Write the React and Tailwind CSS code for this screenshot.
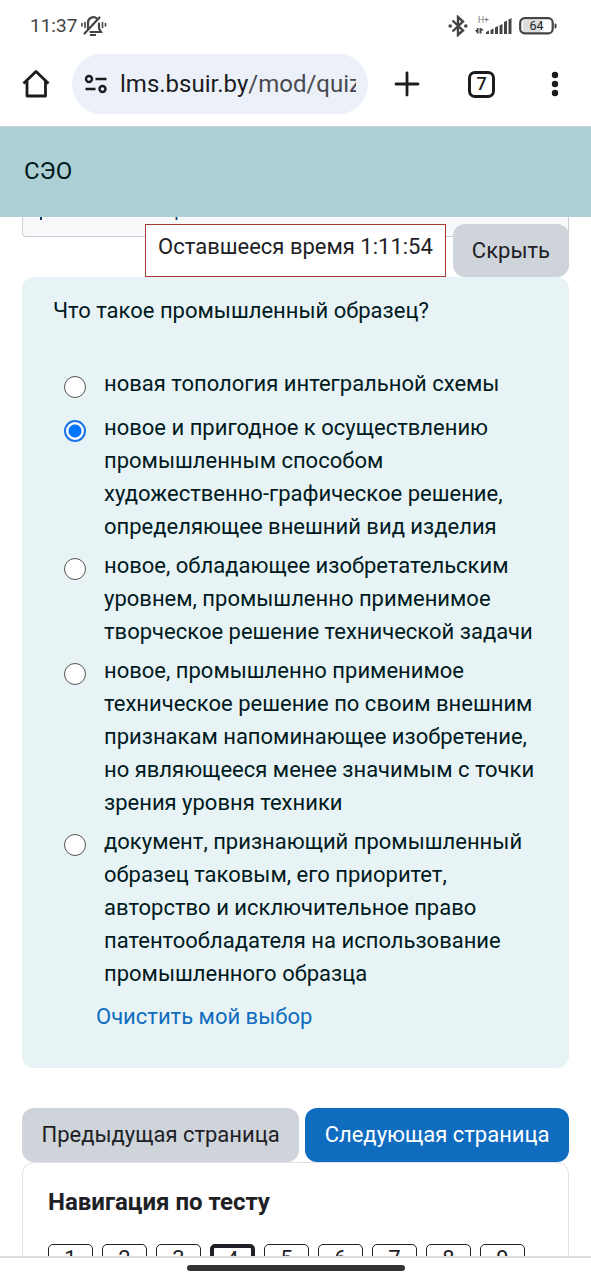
import { useState } from "react";

const answers = [
  "новая топология интегральной схемы",
  "новое и пригодное к осуществлению промышленным способом художественно-графическое решение, определяющее внешний вид изделия",
  "новое, обладающее изобретательским уровнем, промышленно применимое творческое решение технической задачи",
  "новое, промышленно применимое техническое решение по своим внешним признакам напоминающее изобретение, но являющееся менее значимым с точки зрения уровня техники",
  "документ, признающий промышленный образец таковым, его приоритет, авторство и исключительное право патентообладателя на использование промышленного образца",
];

function StatusBar() {
  return (
    <div className="flex h-[52px] shrink-0 items-center justify-between pl-[30px] pr-[34px] text-[#444444]">
      <div className="flex items-center gap-1">
        <span className="text-[19px] leading-6">11:37</span>
        <svg width="26" height="24" viewBox="0 0 26 24" fill="none" stroke="currentColor" strokeWidth="2.200" strokeLinecap="round">
          <path d="M7 14.500V9a5.500 5.500 0 0 1 9-4.500M18 9.500v5l2 3.500H9.500" />
          <path d="M3.500 19.500L18.500 3.500" />
          <path d="M9 21h6" strokeLinecap="butt" strokeWidth="2" />
          <path d="M1 9.500v2.500M4 8.500v5M21.500 8.500v5M24.500 9.500v2.500" strokeWidth="1.600" />
        </svg>
      </div>
      <div className="flex items-center gap-[7px]">
        <svg width="20" height="22" viewBox="0 0 20 22" fill="none" stroke="currentColor" strokeWidth="2.400">
          <path d="M4.500 5.500L15 15.500L10 20V2l5 4.500L4.500 16.500" />
          <circle cx="2.200" cy="11" r="1.800" fill="currentColor" stroke="none" />
          <circle cx="17.800" cy="11" r="1.800" fill="currentColor" stroke="none" />
        </svg>
        <svg width="37" height="20" viewBox="0 0 37 20" fill="currentColor">
          <text x="3" y="7" fontSize="8.500" fontFamily="Roboto, sans-serif" fill="#777777">H+</text>
          <path d="M0 14h1.700V12H3.500v5.500H2.200zM4.500 12H6l3 2.500H6.500v3h-2z" />
          <path d="M11 18v-2l3-1.500V18zM15.500 18v-4l3-1.500V18zM20 18v-6.500l3-1.500v8zM24.500 18V9.500l3-1.500v10zM29 18V6l3-1.500V18zM33.500 18V3.500L36.500 2v16z" />
        </svg>
        <svg width="38" height="18" viewBox="0 0 38 18" fill="none">
          <rect x="4" y="3" width="18" height="12" fill="#dddddd" />
          <rect x="1.200" y="1.200" width="32.500" height="15.200" rx="4.500" stroke="#444444" strokeWidth="2.200" />
          <rect x="35.500" y="6.500" width="2" height="5" rx="1" fill="#444444" />
          <text x="17.500" y="13.300" fontSize="12.500" textAnchor="middle" fontFamily="Roboto, sans-serif" fill="#222222">64</text>
        </svg>
      </div>
    </div>
  );
}

function BrowserBar() {
  return (
    <div className="flex h-[74px] shrink-0 items-center pb-[10px] pl-[22px] pr-[26px] text-[#1c1c1e]">
      <button type="button" aria-label="Главная" className="shrink-0">
        <svg width="28" height="30" viewBox="0 0 28 30" fill="none" stroke="currentColor" strokeWidth="2.800" strokeLinejoin="round">
          <path d="M1.500 14.500L14 2.500L26.500 14.500" />
          <path d="M5 12V27H23.500V12" />
        </svg>
      </button>
      <button type="button" className="ml-[22px] flex h-[60px] min-w-0 flex-1 items-center gap-3 rounded-full bg-[#ebf0f9] pl-3 pr-3 text-left">
        <svg className="shrink-0" width="24" height="20" viewBox="0 0 24 20" fill="none" stroke="currentColor" strokeWidth="2.400">
          <circle cx="5" cy="5" r="3" />
          <path d="M11.500 5H22.500M1.500 15H11.500" />
          <circle cx="18.500" cy="15" r="3" />
        </svg>
        <span className="overflow-hidden whitespace-nowrap text-2xl">
          lms.bsuir.by<span className="text-[#474a50]">/mod/quiz</span>
        </span>
      </button>
      <button type="button" aria-label="Новая вкладка" className="ml-[26px] shrink-0">
        <svg width="26" height="26" viewBox="0 0 26 26" fill="none" stroke="currentColor" strokeWidth="2.800" strokeLinecap="round">
          <path d="M13 2v22M2 13h22" />
        </svg>
      </button>
      <button type="button" aria-label="Вкладки: 7" className="ml-12 flex h-[27px] w-[27px] shrink-0 items-center justify-center rounded-[7px] border-[3px] border-[#1c1c1e] text-lg font-medium">
        7
      </button>
      <button type="button" aria-label="Меню" className="ml-[50px] shrink-0">
        <svg width="20" height="26" viewBox="0 0 20 26" fill="currentColor">
          <circle cx="10" cy="4" r="3.200" />
          <circle cx="10" cy="13" r="3.200" />
          <circle cx="10" cy="22" r="3.200" />
        </svg>
      </button>
    </div>
  );
}

export default function App() {
  const [selected, setSelected] = useState(1);
  return (
    <div className="flex h-screen flex-col overflow-hidden bg-white font-[Roboto,'Noto_Sans',sans-serif] text-[22px] leading-[33px] text-[#1d2125]">
      <StatusBar />
      <BrowserBar />
      <header className="flex h-[91px] shrink-0 items-center border-t border-[#c9d2d4] bg-[#aecfd4] px-6 pb-[2px] text-2xl text-[#001a1e]">
        <a href="#top">СЭО</a>
      </header>

      <main className="relative min-h-0 flex-1 overflow-hidden px-[22px]">
        <section className="mb-10 flex h-5 items-end overflow-hidden rounded-b border border-t-0 border-[#cad0d7] bg-[#f8f9fa] px-4 pb-4">
          <a href="#flag" className="flex items-center gap-1 whitespace-nowrap text-[19px] leading-5 text-[#0f3a66]">
            <svg width="8" height="20" viewBox="0 0 8 20" fill="none" stroke="currentColor" strokeWidth="2">
              <path d="M2 20V3h5v8H2" />
            </svg>
            Отметить вопрос
          </a>
        </section>

        <div className="absolute right-[22px] top-[7px] flex h-[53px] gap-[7px]">
          <div role="timer" className="border border-[#a83a32] bg-white px-3 pt-[5px]">
            Оставшееся время 1:11:54
          </div>
          <button type="button" className="rounded-xl bg-[#ced4da] px-[19px]">Скрыть</button>
        </div>

        <form className="rounded-xl bg-[#e7f3f5] pb-[35px] pl-[31px] pr-[31px] pt-[17px] text-[#001a1e]">
          <fieldset>
            <legend className="mb-10">Что такое промышленный образец?</legend>
            <div className="flex flex-col gap-[6px] pl-[11px]">
              {answers.map((answer, i) => (
                <label key={answer} className="flex min-h-[38px] items-start gap-[18px]">
                  <input
                    type="radio"
                    name="answer"
                    checked={selected === i}
                    onChange={() => setSelected(i)}
                    className="mt-[9px] h-[22px] w-[22px] shrink-0 appearance-none rounded-full border border-[#555555] bg-white checked:border-2 checked:border-[#1a73e8] checked:bg-[radial-gradient(circle,#0075ff_6px,#ffffff_7px)]"
                  />
                  <span>{answer}</span>
                </label>
              ))}
            </div>
          </fieldset>
          <button type="button" onClick={() => setSelected(-1)} className="ml-[43px] mt-[10px] block text-[#0f6cbf]">
            Очистить мой выбор
          </button>
        </form>

        <div className="mt-10 flex justify-between gap-[6px]">
          <button type="button" className="h-[54px] flex-auto whitespace-nowrap rounded-xl bg-[#ced4da] pb-[2px]">
            Предыдущая страница
          </button>
          <button type="button" className="h-[54px] flex-auto whitespace-nowrap rounded-xl bg-[#0f6cbf] pb-[2px] text-white">
            Следующая страница
          </button>
        </div>

        <section className="rounded-t-xl border border-[#dee2e6] px-[25px] pt-[23px]">
          <h2 className="text-2xl font-bold">Навигация по тесту</h2>
          <nav className="mt-[26px] flex flex-wrap gap-[9px]">
            {[1, 2, 3, 4, 5, 6, 7, 8, 9].map((n) => (
              <a
                key={n}
                href={"#q" + n}
                className={
                  n === 4
                    ? "flex h-[60px] w-[45px] justify-center rounded-[5px] border-4 border-[#1d2125] leading-6"
                    : "flex h-[60px] w-[45px] justify-center rounded-[5px] border border-[#1d2125] leading-7"
                }
              >
                {n}
              </a>
            ))}
          </nav>
        </section>
      </main>

      <footer className="flex h-6 shrink-0 justify-center border-t-2 border-[#dddddd] bg-white pt-[7px]">
        <div className="h-[6px] w-[218px] rounded-full bg-[#333333]" />
      </footer>
    </div>
  );
}
